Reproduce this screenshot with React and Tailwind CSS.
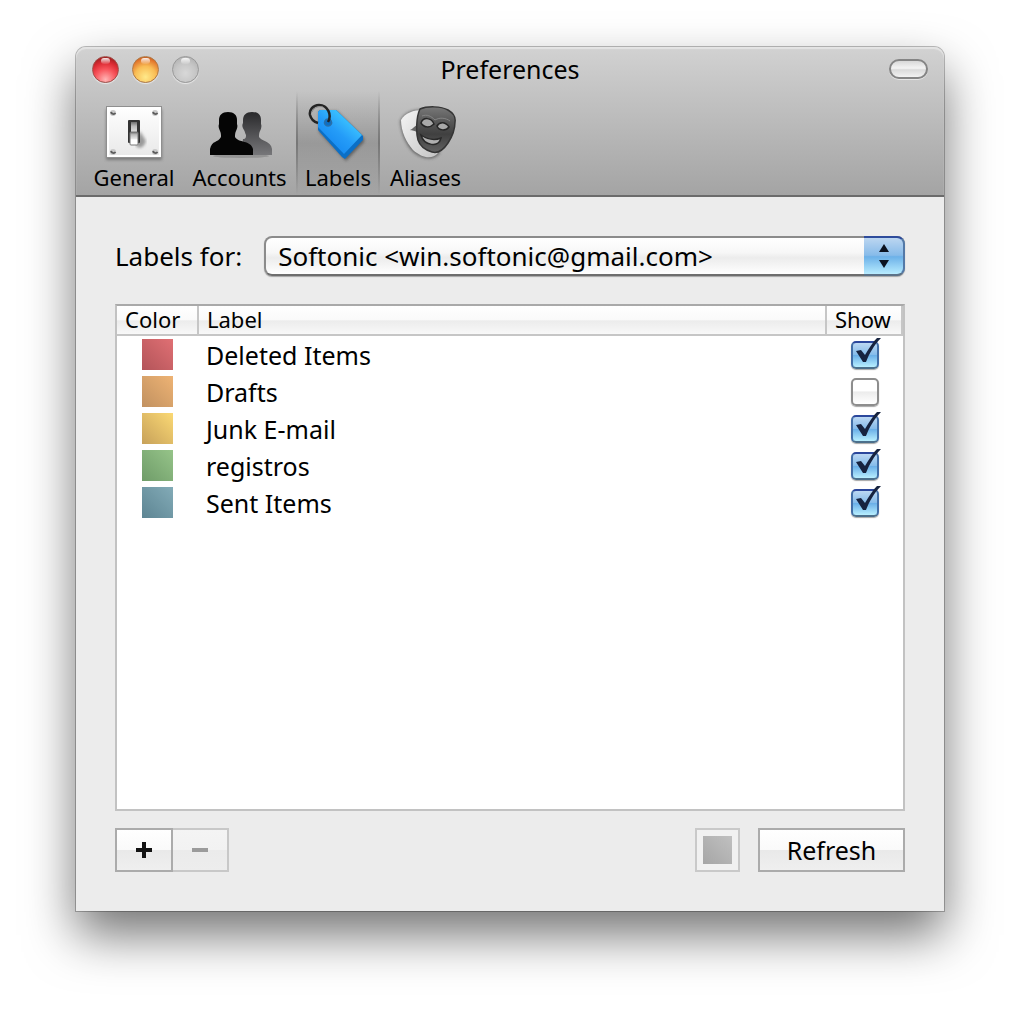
import { useState } from "react";

function GeneralIcon() {
  return (
    <svg viewBox="0 0 62 60" className="h-[60px] w-[62px]" aria-hidden="true">
      <defs>
        <linearGradient id="plate" x1="0" y1="0" x2="0" y2="1">
          <stop offset="0" stopColor="#ffffff" />
          <stop offset="1" stopColor="#e8e8e8" />
        </linearGradient>
        <linearGradient id="knob" x1="0" y1="0" x2="0" y2="1">
          <stop offset="0" stopColor="#6d6d6d" />
          <stop offset="0.2" stopColor="#b9b9b9" />
          <stop offset="0.5" stopColor="#e4e4e4" />
          <stop offset="0.6" stopColor="#ffffff" />
          <stop offset="1" stopColor="#ffffff" />
        </linearGradient>
        <filter id="soft"><feGaussianBlur stdDeviation="1.6" /></filter>
      </defs>
      <rect x="3" y="6" width="56" height="51" rx="1" fill="#555" opacity="0.6" filter="url(#soft)" />
      <rect x="3.5" y="3.5" width="55" height="51" fill="url(#plate)" stroke="#8f8f8f" />
      <rect x="5" y="5" width="52" height="48" fill="none" stroke="#fff" strokeWidth="2" />
      {[[10, 10], [52, 10], [10, 49], [52, 49]].map(([x, y]) => (
        <g key={`${x}-${y}`}>
          <circle cx={x} cy={y} r="3" fill="#c9c9c9" />
          <path d={`M${x - 2} ${y - 1} A2.500 2.500 0 0 0 ${x + 2.5} ${y}`} fill="none" stroke="#5c5c5c" strokeWidth="1.800" />
        </g>
      ))}
      <path d="M33 42 L37 28 L43 38 Q40 47 34 44Z" fill="#777" opacity="0.7" filter="url(#soft)" />
      <rect x="25" y="17" width="12" height="23" rx="1" fill="#333" />
      <rect x="28" y="19" width="6" height="21" fill="url(#knob)" />
      <rect x="27" y="29" width="8" height="13" rx="1" fill="url(#knob)" stroke="#777" strokeWidth="1" />
    </svg>
  );
}

function AccountsIcon() {
  return (
    <svg viewBox="0 0 66 60" className="h-[60px] w-[66px]" aria-hidden="true">
      <defs>
        <linearGradient id="backPerson" x1="0" y1="0" x2="0" y2="1">
          <stop offset="0" stopColor="#29292b" />
          <stop offset="1" stopColor="#77777a" />
        </linearGradient>
      </defs>
      <ellipse cx="34" cy="53" rx="28" ry="2" fill="#777" opacity="0.5" />
      <path
        d="M45 9 C51 9 54 12 54 17 V21 C55 23 54 26 53 28 C52 30 52 32 52 34 C54 38 64 38 65 46 V52 H34 L36 36 C39 36 39 34 39 32 C38 30 38 29 37 27 C35 24 35 22 36 20 V17 C36 12 39 9 45 9Z"
        fill="url(#backPerson)"
      />
      <path
        d="M21 9 C27 9 30 12 30 17 V21 C31 23 30 26 29 28 C28 30 28 32 28 34 C31 40 44 37 46 46 V52 H3 V46 C5 37 11 40 14 34 C14 32 14 30 13 28 C12 26 11 23 12 21 V17 C12 12 15 9 21 9Z"
        fill="#050505"
      />
    </svg>
  );
}

function LabelsIcon() {
  return (
    <svg viewBox="0 0 60 60" className="h-[60px] w-[60px]" aria-hidden="true">
      <defs>
        <linearGradient id="tag" x1="0.2" y1="0.8" x2="0.7" y2="0.2">
          <stop offset="0" stopColor="#1689f0" />
          <stop offset="0.5" stopColor="#249cf8" />
          <stop offset="1" stopColor="#3cc3ff" />
        </linearGradient>
        <filter id="tagShadow"><feGaussianBlur stdDeviation="1.500" /></filter>
      </defs>
      <path d="M11 8 L29 8 L56 35 V39 L38 58 L11 29Z" fill="#333" opacity="0.55" filter="url(#tagShadow)" />
      <path d="M10 9 L12 7 H28 L55 33 V37 L37 56 L34 54 L10 27Z" fill="#0b6fc6" />
      <path
        fillRule="evenodd"
        d="M12 7 H28 L54 32 L36 51 L10 24 V9Z M20 16 a3.500 3.500 0 1 0 0.1 0Z"
        fill="url(#tag)"
      />
      <path d="M20 16 a3.500 3.500 0 1 0 0.1 0Z" fill="none" stroke="#2a6fa8" strokeWidth="1.500" />
      <path d="M20 19 C24 12 20 2 11 2 C5 2 1 7 2 12 C3 16 6 19 10 20" fill="none" stroke="#242424" strokeWidth="2.500" />
      <path d="M4 9 C6 4 11 3 15 4" fill="none" stroke="#8a8a8a" strokeWidth="1" />
    </svg>
  );
}

function AliasesIcon() {
  return (
    <svg viewBox="0 0 62 60" className="h-[60px] w-[62px]" aria-hidden="true">
      <defs>
        <linearGradient id="whiteMask" x1="0" y1="0" x2="1" y2="1">
          <stop offset="0" stopColor="#f5f5f5" />
          <stop offset="1" stopColor="#c4c4c4" />
        </linearGradient>
        <linearGradient id="darkMask" x1="0" y1="0" x2="0" y2="1">
          <stop offset="0" stopColor="#787878" />
          <stop offset="0.35" stopColor="#555" />
          <stop offset="0.6" stopColor="#404040" />
          <stop offset="1" stopColor="#626262" />
        </linearGradient>
        <filter id="maskShadow"><feGaussianBlur stdDeviation="1.500" /></filter>
      </defs>
      <path d="M5 18 C10 9 18 6 28 7 L45 50 C38 58 28 57 18 49 C10 41 6 29 5 18Z" fill="#333" opacity="0.6" filter="url(#maskShadow)" />
      <path d="M6 17 C10 10 18 7 28 7 L43 50 C37 57 27 55 18 47 C11 39 6 28 6 17Z" fill="url(#whiteMask)" />
      <path d="M15 27 C18 26 19 23 23 22 V30 C20 27 17 28 15 27Z" fill="#666" />
      <path
        d="M25 6 C32 3 46 3 53 7 C58 10 61 13 60 19 C60 27 57 34 53 40 C49 46 44 51 37 49 C30 47 25 43 23 37 C21 30 21 14 25 6Z"
        fill="url(#darkMask)"
        stroke="#353535"
        strokeWidth="1.500"
      />
      <path d="M26 20 C28 14 36 14 39 21 C35 25 29 25 26 20Z" fill="#a9a9a9" stroke="#262626" strokeWidth="1.500" />
      <path d="M42 23 C45 18 51 19 54 24 C51 28 44 28 42 23Z" fill="#a9a9a9" stroke="#262626" strokeWidth="1.500" />
      <path d="M27 13 C32 11 36 13 40 17 C45 14 51 15 55 18" fill="none" stroke="#858585" strokeWidth="1" />
      <path d="M26 32 C32 36 39 38 46 35 C44 45 29 43 26 32Z" fill="#b0b0b0" stroke="#292929" strokeWidth="1.500" />
    </svg>
  );
}

const tools = [
  { name: "General", Icon: GeneralIcon, width: "w-[98px]" },
  { name: "Accounts", Icon: AccountsIcon, width: "w-[113px]" },
  { name: "Labels", Icon: LabelsIcon, width: "w-[84px]" },
  { name: "Aliases", Icon: AliasesIcon, width: "w-[91px]" },
];

const initialRows = [
  { name: "Deleted Items", color: "from-[#e07074] to-[#b35459]", show: true },
  { name: "Drafts", color: "from-[#eeb374] to-[#c19160]", show: false },
  { name: "Junk E-mail", color: "from-[#fbd974] to-[#c7a15a]", show: true },
  { name: "registros", color: "from-[#96c489] to-[#6f9c69]", show: true },
  { name: "Sent Items", color: "from-[#83abb7] to-[#5d8593]", show: true },
];

function TrafficLight({ label, className }) {
  return (
    <button
      type="button"
      aria-label={label}
      className={`relative h-[27px] w-[27px] overflow-hidden rounded-full border shadow-[0_1px_1px_rgba(255,255,255,0.6)] ${className}`}
    >
      <span className="absolute left-[8px] top-px h-[6px] w-[9px] rounded-full bg-gradient-to-b from-white/90 to-white/10" />
    </button>
  );
}

function ShowCheckbox({ label, checked, onChange }) {
  return (
    <label className="relative mx-auto block h-7 w-7">
      <input
        type="checkbox"
        aria-label={label}
        checked={checked}
        onChange={onChange}
        className="block h-7 w-7 appearance-none rounded-[5px] border-2 border-[#8d8d8d] bg-[linear-gradient(#fff,#fff_45%,#ececec_50%,#fff)] shadow-[0_1px_1px_rgba(0,0,0,0.35)] checked:border-[#426ea6] checked:border-t-[#2b479c] checked:border-b-[#4c6f8b] checked:bg-[linear-gradient(#bcd8f3,#86bcea_48%,#6bb0e8_52%,#b8efff)]"
      />
      {checked && (
        <svg viewBox="0 0 30 32" className="pointer-events-none absolute -top-1 left-0 h-8 w-[30px]" aria-hidden="true">
          <path d="M5 14 L10 13 L14 18 C18 11 22 5 26 1 L30 1 C23 8 18 17 15 25 H12Z" fill="#17233f" />
        </svg>
      )}
    </label>
  );
}

export default function App() {
  const [active, setActive] = useState("Labels");
  const [rows, setRows] = useState(initialRows);

  const toggle = (index) =>
    setRows(rows.map((row, i) => (i === index ? { ...row, show: !row.show } : row)));

  return (
    <div className="min-h-screen bg-white px-[76px] pb-[105px] pt-[47px] font-['Noto_Sans',sans-serif] text-black">
      <main className="rounded-t-[10px] bg-[#ececec] shadow-[0_0_0_1px_rgba(0,0,0,0.25),0_24px_50px_rgba(0,0,0,0.55)]">
        <header className="rounded-t-[10px] border-b-2 border-[#6b6b6b] bg-gradient-to-b from-[#d2d2d2] to-[#a4a4a4] shadow-[inset_0_2px_1px_#e4e4e4]">
          <div className="grid h-[44px] grid-cols-[1fr_auto_1fr] items-center px-4">
            <div className="flex gap-[13px]">
              <TrafficLight label="Close" className="border-[#a0504a] bg-[radial-gradient(circle_at_50%_90%,#ffb5b5,#f8555c_40%,#dd2c34_65%,#7d1714)]" />
              <TrafficLight label="Minimize" className="border-[#b07a45] bg-[radial-gradient(circle_at_50%_80%,#ffe98a,#f9bd55_45%,#e2762c_75%,#a03a15)]" />
              <TrafficLight label="Zoom" className="border-[#999] bg-[radial-gradient(circle_at_50%_65%,#d8d8d8,#c6c6c6_50%,#a8a8a8)]" />
            </div>
            <h1 className="text-[25px] leading-[32px]">Preferences</h1>
            <button
              type="button"
              aria-label="Toggle toolbar"
              className="h-5 w-[39px] justify-self-end rounded-full border-2 border-[#858585] bg-[linear-gradient(#d8d8d8,#f4f4f4_45%,#dadada_55%,#f2f2f2)] shadow-[0_1px_0_#e6e6e6]"
            />
          </div>
          <nav className="flex h-[104px] px-[9px]" aria-label="Preference sections">
            {tools.map(({ name, Icon, width }) => (
              <button
                key={name}
                type="button"
                aria-pressed={active === name}
                onClick={() => setActive(name)}
                className={`relative flex flex-col items-center pt-3 ${width} ${
                  active === name ? "bg-gradient-to-b from-transparent via-black/15 to-transparent" : ""
                }`}
              >
                {active === name && (
                  <>
                    <span className="absolute inset-y-0 left-0 w-[2px] bg-gradient-to-b from-transparent via-[#777] to-transparent" />
                    <span className="absolute inset-y-0 right-0 w-[2px] bg-gradient-to-b from-transparent via-[#777] to-transparent" />
                  </>
                )}
                <Icon />
                <span className="text-[22px] leading-[28px]">{name}</span>
              </button>
            ))}
          </nav>
        </header>

        <section className="px-[39px] pb-[39px] pt-[39px]">
          <div className="flex items-center gap-[22px]">
            <label htmlFor="account" className="text-[26px] leading-[40px]">Labels for:</label>
            <div className="relative min-w-0 flex-1">
              <select
                id="account"
                className="block h-10 w-full appearance-none rounded-[8px] border-2 border-[#8b8b8b] border-b-[#6e6e6e] bg-[linear-gradient(#fff,#f7f7f7_40%,#ececec_55%,#fff)] pl-[12px] pr-12 text-[26px] leading-[36px] shadow-[0_1px_1px_rgba(0,0,0,0.3)]"
              >
                <option>Softonic &lt;win.softonic@gmail.com&gt;</option>
              </select>
              <span className="pointer-events-none absolute inset-y-0 right-0 flex w-[41px] items-center justify-center rounded-r-[8px] border-y-2 border-r-2 border-[#5379a8] border-t-[#2e4c9c] border-b-[#5c7288] bg-[linear-gradient(#bcd6f1,#87bbe9_48%,#6cb1e8_52%,#b8ecff)]">
                <svg viewBox="0 0 12 26" className="h-[26px] w-3" aria-hidden="true">
                  <path d="M1 9 L6 1 L11 9Z M1 17 L6 25 L11 17Z" fill="#0c1220" />
                </svg>
              </span>
            </div>
          </div>

          <div className="mt-7 min-h-[507px] border-2 border-[#c2c2c2] border-t-[#a9a9a9] bg-white">
            <table className="w-full table-fixed border-separate border-spacing-0 text-left">
              <colgroup>
                <col className="w-[82px]" />
                <col />
                <col className="w-[76px]" />
              </colgroup>
              <thead>
                <tr className="h-[30px] bg-[linear-gradient(#fff,#fafafa_45%,#ececec_50%,#fafafa)] text-[22px] leading-[26px]">
                  <th scope="col" className="border-b-2 border-r-2 border-[#c6c6c6] p-0 pb-[2px] pl-2 font-normal">Color</th>
                  <th scope="col" className="border-b-2 border-r-2 border-[#c6c6c6] p-0 pb-[2px] pl-2 font-normal">Label</th>
                  <th scope="col" className="border-b-2 border-r-2 border-[#c6c6c6] p-0 pb-[2px] pl-2 font-normal">Show</th>
                </tr>
              </thead>
              <tbody>
                {rows.map((row, index) => (
                  <tr key={row.name} className="h-[37px] text-[25px] leading-[36px]">
                    <td className="p-0 pl-[25px]">
                      <div className={`h-[31px] w-[31px] bg-gradient-to-bl ${row.color}`} />
                    </td>
                    <td className="p-0 pl-[7px]">{row.name}</td>
                    <td className="p-0">
                      <ShowCheckbox label={`Show ${row.name}`} checked={row.show} onChange={() => toggle(index)} />
                    </td>
                  </tr>
                ))}
              </tbody>
            </table>
          </div>

          <div className="mt-[17px] flex h-11 items-stretch">
            <button type="button" aria-label="Add label" className="flex w-[58px] items-center justify-center border-2 border-[#ababab] bg-[linear-gradient(#fff,#fafafa_50%,#e9e9e9_51%,#efefef)]">
              <svg viewBox="0 0 16 16" className="h-4 w-4" aria-hidden="true">
                <path d="M8 0 V16 M0 8 H16" stroke="#141414" strokeWidth="4" />
              </svg>
            </button>
            <button type="button" disabled aria-label="Remove label" className="flex w-14 items-center justify-center border-2 border-l-0 border-[#c8c8c8] bg-[linear-gradient(#f4f4f4,#f2f2f2_50%,#ebebeb_51%,#ededed)]">
              <svg viewBox="0 0 16 16" className="h-4 w-4" aria-hidden="true">
                <path d="M0 8 H16" stroke="#9b9b9b" strokeWidth="4" />
              </svg>
            </button>
            <button type="button" aria-label="Label color" className="ml-auto w-[45px] border-2 border-[#c9c9c9] bg-[#f1f1f1] p-[6px]">
              <span className="block h-full w-full bg-gradient-to-bl from-[#c0c0c0] to-[#a6a6a6]" />
            </button>
            <button type="button" className="ml-[18px] w-[147px] border-2 border-[#ababab] bg-[linear-gradient(#fff,#fafafa_50%,#e9e9e9_51%,#efefef)] text-[25px] leading-[36px]">
              Refresh
            </button>
          </div>
        </section>
      </main>
    </div>
  );
}
